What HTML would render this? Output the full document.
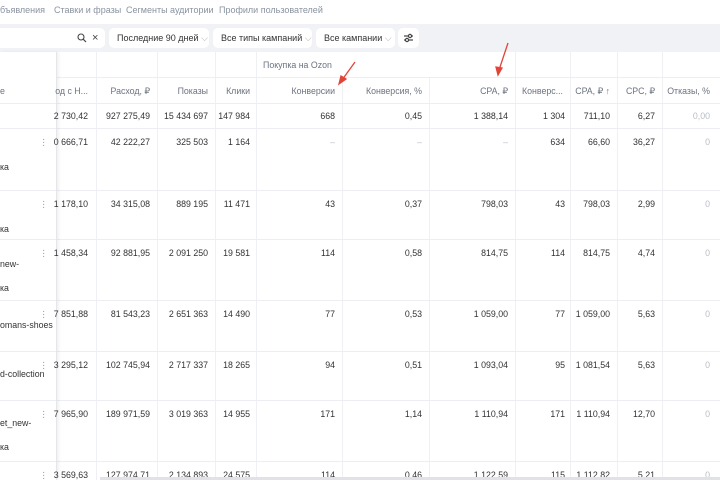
<!DOCTYPE html><html><head><meta charset="utf-8"><style>
*{margin:0;padding:0;box-sizing:border-box}
html,body{width:720px;height:480px;overflow:hidden}
body{background:#fff;font-family:"Liberation Sans",sans-serif;font-size:8.8px;color:#333;position:relative}
.a{position:absolute;white-space:nowrap}
.tab{top:5px;color:#8a93a0;font-size:9px}
.bar{top:24px;left:0;width:720px;height:28px;background:#f0f2f5}
.pill{top:28px;height:20px;background:#fff;border-radius:5px;font-size:9px;line-height:20px;padding-left:8px;color:#333}
.vl{position:absolute;bottom:0;width:1px;background:#eef0f3}
.hl{position:absolute;left:0;width:720px;height:1px;background:#eceef1}
.r{position:absolute;text-align:right;white-space:nowrap}
.h{color:#6b7380}
.g{color:#b8bdc4}
.dots{position:absolute;left:42px;color:#999;font-size:10px;line-height:3px;width:3px}
</style></head><body>
<div class="a tab" style="left:0">бъявления</div>
<div class="a tab" style="left:54px">Ставки и фразы</div>
<div class="a tab" style="left:126px">Сегменты аудитории</div>
<div class="a tab" style="left:219px">Профили пользователей</div>
<div class="a bar"></div>
<div class="a pill" style="left:0;width:105px;border-radius:0 5px 5px 0"><svg style="position:absolute;left:77px;top:5px" width="10" height="10"><circle cx="4" cy="4" r="3" fill="none" stroke="#444" stroke-width="1.1"/><line x1="6.2" y1="6.2" x2="9" y2="9" stroke="#444" stroke-width="1.2"/></svg><span style="position:absolute;left:92px;color:#444;font-size:11px">×</span></div>
<div class="a pill" style="left:109px;width:100px">Последние 90 дней <span style="color:#aaa">⌵</span></div>
<div class="a pill" style="left:213px;width:99px">Все типы кампаний <span style="color:#aaa">⌵</span></div>
<div class="a pill" style="left:316px;width:79px">Все кампании <span style="color:#aaa">⌵</span></div>
<div class="a pill" style="left:398px;width:21px;padding:0"><svg width="21" height="20"><g stroke="#444" stroke-width="1.2"><line x1="6" y1="8" x2="15" y2="8"/><line x1="6" y1="12" x2="15" y2="12"/><circle cx="12" cy="8" r="1.6" fill="#fff"/><circle cx="9" cy="12" r="1.6" fill="#fff"/></g></svg></div>

<div class="vl" style="left:96px;top:52px"></div><div class="vl" style="left:157px;top:52px"></div><div class="vl" style="left:215px;top:52px"></div><div class="vl" style="left:256px;top:52px"></div><div class="vl" style="left:342px;top:77px"></div><div class="vl" style="left:429px;top:77px"></div><div class="vl" style="left:515px;top:52px"></div><div class="vl" style="left:570px;top:52px"></div><div class="vl" style="left:617px;top:52px"></div><div class="vl" style="left:662px;top:52px"></div>
<div class="hl" style="top:77px;left:57px"></div><div class="hl" style="top:103px"></div><div class="hl" style="top:128px"></div><div class="hl" style="top:190px"></div><div class="hl" style="top:239px"></div><div class="hl" style="top:300px"></div><div class="hl" style="top:351px"></div><div class="hl" style="top:400px"></div><div class="hl" style="top:461px"></div>
<div class="a" style="left:0;top:52px;width:57px;height:428px;border-right:1px solid #e4e6ea;box-shadow:2px 0 3px rgba(0,0,0,.06)"></div>

<div class="a h" style="left:263px;top:60px">Покупка на Ozon</div>
<div class="a h" style="left:0;top:86px">e</div>
<div id="rows"></div>
<svg class="a" style="left:0;top:0" width="720" height="480"><g stroke="#e0453a" stroke-width="1.3" fill="#e0453a"><line x1="355" y1="62" x2="342" y2="80"/><polygon points="339,84 341,76 346,79"/><line x1="508" y1="43" x2="499" y2="70"/><polygon points="498,75 496,67 502,68"/></g></svg>
<div class="a" style="left:100px;top:477px;width:620px;height:3px;background:#e0e2e6"></div>
<script>
const R=[88,150,208,250,335,422,508,0,610,655,710];
function row(y,v,cls){let s='';v.forEach((t,i)=>{if(t===null)return;
s+=`<div class="r ${(i==10&&!cls)?'g':(cls||'')}" style="right:${720-R[i]}px;top:${y}px">${t}</div>`});return s}
let h=row(86,['од с Н...','Расход, ₽','Показы','Клики','Конверсии','Конверсия, %','CPA, ₽',null,'CPA, ₽ ↑','CPC, ₽','Отказы, %'],'h');
h+='<div class="a h" style="left:522px;top:86px">Конверс...</div>';
h+=row(111,['2 730,42','927 275,49','15 434 697','147 984','668','0,45','1 388,14',null,'711,10','6,27','0,00']);
h+='<div class="r" style="right:155px;top:111px">1 304</div>';
const D=[[128,['0 666,71','42 222,27','325 503','1 164','–','–','–','634','66,60','36,27','0'],[['ка',162]]],
[190,['1 178,10','34 315,08','889 195','11 471','43','0,37','798,03','43','798,03','2,99','0'],[['ка',224]]],
[239,['1 458,34','92 881,95','2 091 250','19 581','114','0,58','814,75','114','814,75','4,74','0'],[['new-',259],['ка',283]]],
[300,['7 851,88','81 543,23','2 651 363','14 490','77','0,53','1 059,00','77','1 059,00','5,63','0'],[['omans-shoes',320]]],
[351,['3 295,12','102 745,94','2 717 337','18 265','94','0,51','1 093,04','95','1 081,54','5,63','0'],[['d-collection',369]]],
[400,['7 965,90','189 971,59','3 019 363','14 955','171','1,14','1 110,94','171','1 110,94','12,70','0'],[['et_new-',418],['ка',442]]],
[461,['3 569,63','127 974,71','2 134 893','24 575','114','0,46','1 122,59','115','1 112,82','5,21','0'],[]]];
D.forEach(([y,v,sub])=>{const t=y+9;v.forEach((x,i)=>{let c=(i==10)?'g':(x=='–'?'g':'');if(i==7){h+=`<div class="r" style="right:155px;top:${t}px">${x}</div>`;return}h+=`<div class="r ${c}" style="right:${720-R[i]}px;top:${t}px">${x}</div>`});
sub.forEach(([s,yy])=>h+=`<div class="a" style="left:0;top:${yy}px">${s}</div>`);
h+=`<div class="dots" style="top:${y+10}px">·<br>·<br>·</div>`});
document.getElementById('rows').outerHTML=h;
</script>
</body></html>
